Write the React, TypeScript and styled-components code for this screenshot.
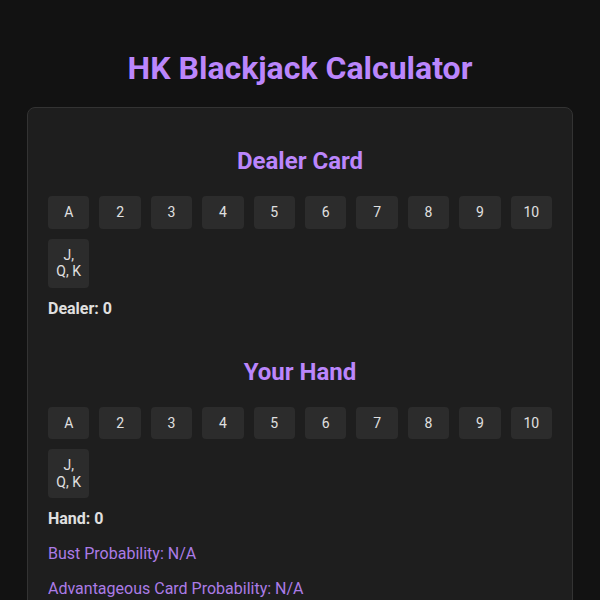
import React, { useState } from "react";
import styled, { createGlobalStyle } from "styled-components";

// non-breaking space keeps "Q, K" together on the second line
const FACE = "J, Q,\u00A0K";
const cards = ["A", "2", "3", "4", "5", "6", "7", "8", "9", "10", FACE];

const cardValue = (card: string) => {
  if (card === "A") return 11;
  if (card === FACE) return 10;
  return parseInt(card, 10);
};

function App() {
  const [dealer, setDealer] = useState(0);
  const [hand, setHand] = useState<number[]>([]);

  const total = hand.reduce((sum, v) => sum + v, 0);
  const bust =
    hand.length === 0
      ? "N/A"
      : `${Math.round(
          (cards.filter((c) => total + (c === "A" ? 1 : cardValue(c)) > 21).length /
            cards.length) *
            100
        )}%`;
  const advantage =
    hand.length === 0
      ? "N/A"
      : `${Math.round(
          (cards.filter((c) => {
            const next = total + (c === "A" ? 1 : cardValue(c));
            return next <= 21 && next >= 17;
          }).length /
            cards.length) *
            100
        )}%`;

  return (
    <Page>
      <GlobalStyle />
      <Title>HK Blackjack Calculator</Title>
      <Panel>
        <Section>
          <Heading>Dealer Card</Heading>
          <CardGrid>
            {cards.map((c) => (
              <CardButton key={c} onClick={() => setDealer(cardValue(c))}>
                {c}
              </CardButton>
            ))}
          </CardGrid>
          <Total>Dealer: {dealer}</Total>
        </Section>
        <Section>
          <Heading>Your Hand</Heading>
          <CardGrid>
            {cards.map((c) => (
              <CardButton key={c} onClick={() => setHand([...hand, cardValue(c)])}>
                {c}
              </CardButton>
            ))}
          </CardGrid>
          <Total>Hand: {total}</Total>
          <Stat>Bust Probability: {bust}</Stat>
          <Stat>Advantageous Card Probability: {advantage}</Stat>
        </Section>
      </Panel>
    </Page>
  );
}

export default App;

const GlobalStyle = createGlobalStyle`
  body {
    margin: 0;
    background: #121212;
    color: #e0e0e0;
    font-family: Roboto, "Liberation Sans", sans-serif;
  }
`;

const Page = styled.div`
  min-height: 100vh;
  padding: 0 27px;
  box-sizing: border-box;
  overflow: hidden;
`;

const Title = styled.h1`
  margin: 49px 0 20px;
  text-align: center;
  font-size: 32px;
  font-weight: 700;
  line-height: 38px;
  color: #bb86fc;
`;

const Panel = styled.div`
  background: #1e1e1e;
  border: 1px solid #333;
  border-radius: 8px;
  padding: 20px;
`;

const Section = styled.section`
  & + & {
    margin-top: 40px;
  }
`;

const Heading = styled.h2`
  margin: 19px 0 21px;
  text-align: center;
  font-size: 24px;
  font-weight: 700;
  line-height: 28px;
  color: #bb86fc;
`;

const CardGrid = styled.div`
  display: grid;
  grid-template-columns: repeat(10, 1fr);
  gap: 10px;
`;

const CardButton = styled.button`
  padding: 8px 5px;
  border: none;
  border-radius: 4px;
  background: #2c2c2c;
  color: #e0e0e0;
  font-family: Roboto, "Liberation Sans", sans-serif;
  font-size: 14px;
  line-height: 16.5px;
  cursor: pointer;

  &:hover {
    background: #383838;
  }
`;

const Total = styled.p`
  margin: 11px 0 0;
  font-size: 16px;
  font-weight: 700;
  line-height: 19px;
`;

const Stat = styled.p`
  margin: 16px 0 0;
  font-size: 16px;
  line-height: 19px;
  color: #bb86fc;
  opacity: 0.9;
`;
